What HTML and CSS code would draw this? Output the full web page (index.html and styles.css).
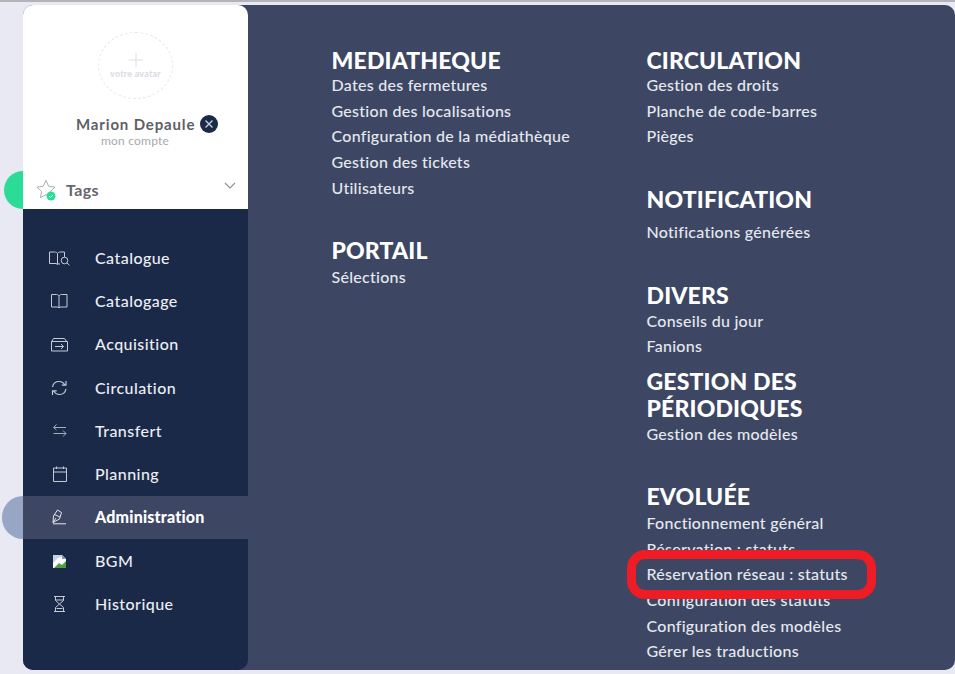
FILE: index.html
```html
<!DOCTYPE html>
<html lang="fr">
<head>
<meta charset="utf-8">
<title>Administration</title>
<link rel="stylesheet" href="styles.css">
</head>
<body>
<div class="app">
  <aside class="side">
    <div class="profile">
      <div class="avatar">
        <svg class="plus" width="16" height="16" viewBox="0 0 16 16"><path d="M8 1v14M1 8h14" stroke="#dcdde6" stroke-width="1" fill="none"/></svg>
        <span class="avatar-text">votre avatar</span>
      </div>
      <div class="name-row">
        <span class="name">Marion Depaule</span>
        <span class="close"><svg width="10" height="10" viewBox="0 0 10 10"><path d="M1.5 1.5l7 7M8.5 1.5l-7 7" stroke="#c8cede" stroke-width="1.4" fill="none"/></svg></span>
      </div>
      <div class="account">mon compte</div>
      <div class="tags">
        <svg class="star" width="22" height="22" viewBox="0 0 22 22"><path d="M10 1.500l2.700 5.800 6.300.8-4.600 4.300 1.200 6.300-5.600-3.100-5.600 3.100 1.200-6.300L.9 8.100l6.300-.8z" fill="none" stroke="#a9adb5" stroke-width="1"/><circle cx="15" cy="17" r="4.500" fill="#2cdc96"/><path d="M13 17l1.500 1.500 2.500-2.600" stroke="#fff" stroke-width="1" fill="none"/></svg>
        <span class="tags-label">Tags</span>
        <svg class="chev" width="12" height="7" viewBox="0 0 12 7"><path d="M1 1l5 5 5-5" stroke="#8b8f96" stroke-width="1.100" fill="none"/></svg>
      </div>
    </div>
    <nav class="nav">
      <a class="item"><svg class="ico" width="22" height="16" viewBox="0 0 22 16"><path d="M1.500 2h5c1.500 0 2.500.5 3 1.500.5-1 1.500-1.500 3-1.500h4v5M9.500 3.500v10.500M1.500 2v11.500h6.500l1.500 1 1.500-1M12 14h-1" stroke="#c5cad6" fill="none"/><circle cx="16.500" cy="10.500" r="3.300" stroke="#c5cad6" fill="none"/><path d="M19 13l2.500 2.300" stroke="#c5cad6" fill="none"/></svg><span>Catalogue</span></a>
      <a class="item"><svg class="ico" width="22" height="16" viewBox="0 0 22 16"><path d="M3.500 1.500h5c1 0 2 .5 2.500 1.500.5-1 1.500-1.500 2.500-1.500h5.500v12.500h-7l-1 1-1-1h-6.500zM11 3v11" stroke="#c5cad6" fill="none"/></svg><span>Catalogage</span></a>
      <a class="item"><svg class="ico" width="22" height="16" viewBox="0 0 22 16"><path d="M3.500 6l2-3.500h11l2.500 3.500M3.500 5.500h16v9.500h-16zM7 10.500h8.500M13 8l2.500 2.500-2.500 2.500" stroke="#c5cad6" fill="none"/></svg><span>Acquisition</span></a>
      <a class="item"><svg class="ico" width="22" height="16" viewBox="0 0 22 16"><path d="M4.500 7c.7-3.300 3.300-5.500 6.500-5.500 2.500 0 4.500 1.200 5.700 3.200M18 1v4.200h-4.200M18 9c-.7 3.300-3.300 5.500-6.500 5.500-2.500 0-4.500-1.200-5.700-3.200M4.500 15v-4.200h4.200" stroke="#c5cad6" stroke-width="1.200" fill="none"/></svg><span>Circulation</span></a>
      <a class="item"><svg class="ico" width="22" height="16" viewBox="0 0 22 16"><path d="M5.500 4.500h12.500M5.500 4.500l3-3M5.500 4.500l3 2.500M18 10.500h-12.500M18 10.500l-3-3M18 10.500l-3 3" stroke="#a6acba" fill="none"/></svg><span>Transfert</span></a>
      <a class="item"><svg class="ico" width="22" height="16" viewBox="0 0 22 16"><path d="M5.500 2h13v13.500h-13zM5.500 6h13M8.500 .5v2.500M15.500 .5v2.500" stroke="#c5cad6" fill="none"/></svg><span>Planning</span></a>
      <a class="item active"><svg class="ico" width="22" height="16" viewBox="0 0 22 16"><path d="M5 13.500l.5-6.500 4-6 4 2.500-2 6.500zM5 13.500l3-4.500M6.500 5.500l5.500 2.500M5 14.800h13" stroke="#e4e6ec" fill="none"/></svg><span>Administration</span></a>
      <a class="item"><svg class="ico" width="22" height="16" viewBox="0 0 22 16"><path d="M5 2h9l4 4v9H5z" fill="#fff"/><path d="M5 2h9v2l-4 1-5 5z" fill="#c3d2ee"/><path d="M6 15l5-5 3 2 4-4v7z" fill="#4f9e46"/><path d="M14 2l4 4h-4z" fill="#8b96ad"/></svg><span>BGM</span></a>
      <a class="item"><svg class="ico" width="22" height="16" viewBox="0 0 22 16"><path d="M6 .5h11M6 15.500h11M7.500.5v4l4 3.500-4 3.500v4M15.500.5v4l-4 3.500 4 3.500v4M7.500 4h8M8.500 12.500h6" stroke="#c5cad6" fill="none"/></svg><span>Historique</span></a>
    </nav>
  </aside>
  <main class="content">
    <div class="col">
      <section class="group first">
        <h2>MEDIATHEQUE</h2>
        <a>Dates des fermetures</a>
        <a>Gestion des localisations</a>
        <a>Configuration de la médiathèque</a>
        <a>Gestion des tickets</a>
        <a>Utilisateurs</a>
      </section>
      <section class="group portail">
        <h2>PORTAIL</h2>
        <a>Sélections</a>
      </section>
    </div>
    <div class="col">
      <section class="group first">
        <h2>CIRCULATION</h2>
        <a>Gestion des droits</a>
        <a>Planche de code-barres</a>
        <a>Pièges</a>
      </section>
      <section class="group notif">
        <h2>NOTIFICATION</h2>
        <a>Notifications générées</a>
      </section>
      <section class="group divers">
        <h2>DIVERS</h2>
        <a>Conseils du jour</a>
        <a>Fanions</a>
      </section>
      <section class="group perio">
        <h2>GESTION DES PÉRIODIQUES</h2>
        <a>Gestion des modèles</a>
      </section>
      <section class="group evol">
        <h2>EVOLUÉE</h2>
        <a>Fonctionnement général</a>
        <a>Réservation : statuts</a>
        <a class="marked">Réservation réseau : statuts</a>
        <a>Configuration des statuts</a>
        <a>Configuration des modèles</a>
        <a>Gérer les traductions</a>
      </section>
    </div>
  </main>
</div>
</body>
</html>
```
FILE: styles.css
```css
*, *::before, *::after { box-sizing: border-box; }
body {
  margin: 0;
  height: 674px;
  overflow: hidden;
  background: #e8e9f3;
  border-top: 2px solid #b4b4b8;
  padding: 3px 0 0 23px;
  font-family: "Lato", "Liberation Sans", sans-serif;
}
.app {
  display: flex;
  height: 665px;
  background: #3d4763;
  border-radius: 10px;
}
.side {
  width: 224.500px;
  flex: none;
  display: flex;
  flex-direction: column;
}
.profile {
  height: 204px;
  background: #fff;
  border-radius: 10px 10px 0 0;
  position: relative;
  display: flex;
  flex-direction: column;
  padding-top: 27px;
}
.avatar {
  width: 75px;
  height: 67px;
  margin-left: 75px;
  border: 1px dashed #e6e6ec;
  border-radius: 50%;
  display: flex;
  flex-direction: column;
  align-items: center;
  padding-top: 19px;
}
.plus { display: block; }
.avatar-text {
  font-size: 9px;
  font-weight: 900;
  letter-spacing: .2px;
  color: #dcdde6;
  margin-top: 1px;
  line-height: 10px;
  white-space: nowrap;
}
.name-row {
  display: flex;
  align-items: center;
  margin: 15px 0 0 53px;
  height: 20px;
}
.name {
  font-size: 15px;
  font-weight: 700;
  color: #5f5f66;
  letter-spacing: .85px;
}
.close {
  width: 18px;
  height: 18px;
  margin-left: 5px;
  border-radius: 50%;
  background: #1a2948;
  display: flex;
  align-items: center;
  justify-content: center;
}
.account {
  font-size: 12px;
  letter-spacing: .2px;
  color: #a9a9ae;
  margin: -1px 0 0 78px;
  line-height: 15px;
}
.tags {
  display: flex;
  align-items: center;
  height: 38px;
  margin-top: auto;
  padding-left: 13px;
  position: relative;
}
.tags::before {
  content: "";
  position: absolute;
  left: -19px;
  top: 0;
  width: 19px;
  height: 38px;
  background: #2cdc96;
  border-radius: 19px 0 0 19px;
}
.star { flex: none; }
.tags-label {
  margin-left: 8px;
  margin-bottom: 2px;
  font-size: 16px;
  font-weight: 700;
  color: #66666c;
  letter-spacing: .4px;
}
.chev { position: absolute; right: 12px; top: 11px; }
.nav {
  flex: 1;
  background: #1a2948;
  border-radius: 0 0 10px 10px;
  padding-top: 27px;
}
.item {
  display: flex;
  align-items: center;
  height: 43.300px;
  padding-left: 25px;
  font-size: 16px;
  letter-spacing: .45px;
  font-weight: 500;
  color: #eceef4;
  position: relative;
}
.item span { margin-left: 25px; position: relative; top: -.5px; }
.ico { flex: none; }
.active {
  background: #3d4763;
  font-weight: 900;
  letter-spacing: .2px;
  color: #fff;
}
.active::before {
  content: "";
  position: absolute;
  left: -21px;
  top: 0;
  width: 21px;
  height: 100%;
  background: #97a6c4;
  border-radius: 22px 0 0 22px;
}
.content {
  flex: 1;
  display: flex;
  padding-left: 84px;
  overflow: hidden;
}
.col { width: 315px; flex: none; }
.group h2 {
  margin: 0;
  font-size: 23px;
  line-height: 27px;
  font-weight: 900;
  letter-spacing: .15px;
  color: #fff;
}
.group a {
  display: block;
  height: 25.700px;
  line-height: 25.700px;
  font-size: 16px;
  letter-spacing: .27px;
  font-weight: 500;
  color: #e6e8ef;
}
.first { padding-top: 42px; }
.first h2 { margin-bottom: -2px; }
.portail { margin-top: 37px; }
.notif { margin-top: 37px; }
.notif h2 { margin-bottom: 6px; }
.divers { margin-top: 37px; }
.divers h2 { margin-bottom: -1px; }
.perio { margin-top: 9px; }
.perio h2 { width: 220px; margin-bottom: -1px; }
.evol { margin-top: 36px; }
.marked { position: relative; }
.marked::after {
  content: "";
  position: absolute;
  left: -20px;
  top: -11px;
  width: 249px;
  height: 49px;
  border: 9px solid #ee1c25;
  border-radius: 18px;
}
```
